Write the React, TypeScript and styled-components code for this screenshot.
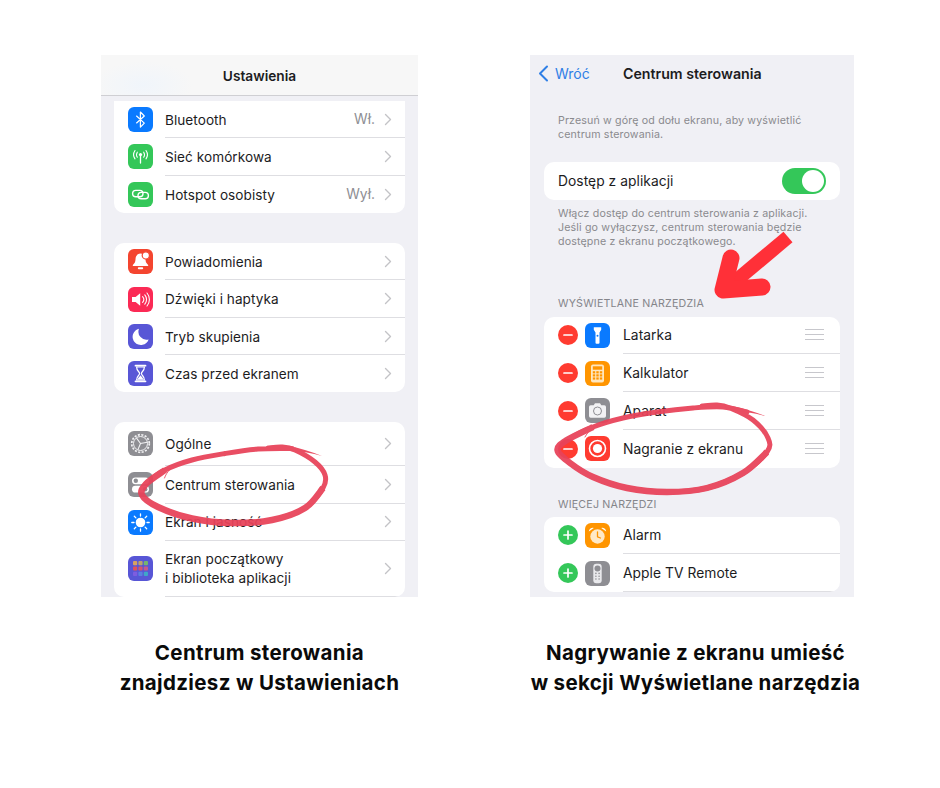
import React from 'react'
import styled, {createGlobalStyle} from 'styled-components'

const GlobalStyle = createGlobalStyle`
  body {
    margin: 0;
    background: #ffffff;
    font-family: Inter, "Liberation Sans", sans-serif;
    color: #1c1c1e;
  }
`

const Page = styled.div`
  width: 940px;
  height: 788px;
  display: flex;
  padding: 55px 0 0 101px;
  box-sizing: border-box;
  overflow: hidden;
`
const Column = styled.div<{$w: number; $mr?: number}>`
  width: ${p => p.$w}px;
  margin-right: ${p => p.$mr ?? 0}px;
  display: flex;
  flex-direction: column;
  align-items: center;
`
const Phone = styled.div<{$w: number}>`
  position: relative;
  width: ${p => p.$w}px;
  height: 542px;
  flex-shrink: 0;
  overflow: hidden;
  background: #f0f0f5;
`
const Caption = styled.h2<{$shift?: number}>`
  margin: 41px 0 0 ${p => p.$shift ?? 0}px;
  font-size: 20.5px;
  line-height: 30px;
  font-weight: 700;
  letter-spacing: 0.35px;
  text-align: center;
  white-space: nowrap;
  color: #0a0a0a;
`
const MainBar = styled.div`
  height: 41px;
  display: flex;
  align-items: center;
  justify-content: center;
  padding-top: 2px;
  box-sizing: border-box;
  background: radial-gradient(ellipse 50px 24px at 42px 30px, #f0f5fb 0%, rgba(240, 245, 251, 0) 100%), #f7f7f7;
  border-bottom: 1px solid #cfcfd3;
  font-size: 13.7px;
  font-weight: 600;
`
const Groups = styled.div`
  display: flex;
  flex-direction: column;
  gap: 30px;
  padding: 5px 13px 0;
`
const Card = styled.div<{$square?: boolean}>`
  background: #ffffff;
  border-radius: ${p => (p.$square ? '0 0 10px 10px' : '10px')};
  overflow: hidden;
`
const Row = styled.div<{$h: number; $gap: number}>`
  height: ${p => p.$h}px;
  display: flex;
  align-items: center;
  gap: ${p => p.$gap}px;
  padding-left: 14px;
`
const IconTile = styled.div<{$bg: string}>`
  width: 25px;
  height: 25px;
  flex-shrink: 0;
  border-radius: 6px;
  background: ${p => p.$bg};
  display: flex;
  align-items: center;
  justify-content: center;
  svg {
    display: block;
  }
`
const RowBody = styled.div<{$last?: boolean}>`
  flex: 1;
  align-self: stretch;
  min-width: 0;
  display: flex;
  align-items: center;
  justify-content: space-between;
  padding-right: 14px;
  border-bottom: ${p => (p.$last ? 'none' : '1px solid #dedee2')};
  > :first-child {
    margin-top: 2px;
  }
`
const Label = styled.span<{$size: number}>`
  font-size: ${p => p.$size}px;
  line-height: 19px;
  letter-spacing: 0.05px;
`
const RowEnd = styled.span`
  display: flex;
  align-items: center;
  gap: 9px;
  margin-right: -1px;
`
const Value = styled.span`
  font-size: 13.8px;
  color: #8e8e93;
`
const DetailBar = styled.div`
  height: 36px;
  display: flex;
  align-items: center;
  padding-left: 8px;
  font-size: 14px;
`
const BackLink = styled.span`
  width: 85px;
  display: flex;
  align-items: center;
  gap: 6px;
  color: #2f7fe6;
`
const BarTitle = styled.span`
  font-size: 14.2px;
  font-weight: 600;
`
const Note = styled.p<{$top: number; $bottom: number}>`
  margin: ${p => p.$top}px 0 ${p => p.$bottom}px;
  padding: 0 14px 0 28px;
  font-size: 10.65px;
  line-height: 13.7px;
  letter-spacing: 0.15px;
  color: #8a8a8e;
`
const SectionTitle = styled.div<{$top: number; $bottom: number}>`
  margin: ${p => p.$top}px 0 ${p => p.$bottom}px;
  padding-left: 28px;
  font-size: 10.65px;
  line-height: 14px;
  letter-spacing: 0.2px;
  color: #85858a;
`
const RightGroups = styled.div`
  padding: 0 14px;
`
const ToggleRow = styled.div`
  height: 38px;
  display: flex;
  align-items: center;
  justify-content: space-between;
  padding: 0 14px;
  background: #ffffff;
  border-radius: 10px;
`
const Toggle = styled.span`
  width: 44px;
  height: 26px;
  padding: 2px;
  box-sizing: border-box;
  display: flex;
  justify-content: flex-end;
  border-radius: 13px;
  background: #34c759;
  &::after {
    content: '';
    width: 22px;
    height: 22px;
    border-radius: 50%;
    background: #ffffff;
  }
`
const RoundBadge = styled.span<{$bg: string}>`
  width: 20px;
  height: 20px;
  flex-shrink: 0;
  border-radius: 50%;
  background: ${p => p.$bg};
  display: flex;
  align-items: center;
  justify-content: center;
  svg {
    display: block;
  }
`
const LeadIn = styled.div`
  display: flex;
  align-items: center;
  gap: 7px;
`
const Grip = styled.span`
  width: 19px;
  height: 11px;
  margin-right: 2px;
  box-sizing: border-box;
  border-top: 1px solid #c7c7cc;
  border-bottom: 1px solid #c7c7cc;
  display: flex;
  align-items: center;
  &::after {
    content: '';
    width: 100%;
    height: 1px;
    background: #c7c7cc;
  }
`
const Overlay = styled.svg`
  position: absolute;
  inset: 0;
  width: 100%;
  height: 100%;
  pointer-events: none;
`

// catmull-rom through the traced points of a hand drawn mark
const smoothPath = (pts: number[][]) => {
  let d = `M${pts[0][0]} ${pts[0][1]}`
  for (let i = 0; i < pts.length - 1; i++) {
    const a = pts[Math.max(i - 1, 0)]
    const b = pts[i]
    const c = pts[i + 1]
    const e = pts[Math.min(i + 2, pts.length - 1)]
    d += `C${b[0] + (c[0] - a[0]) / 6} ${b[1] + (c[1] - a[1]) / 6} ${c[0] - (e[0] - b[0]) / 6} ${c[1] - (e[1] - b[1]) / 6} ${c[0]} ${c[1]}`
  }
  return d
}

const leftLoop = [
  [292, 448.5], [258, 449], [225, 453.5], [192, 460], [165, 470], [146, 484], [142, 495], [158, 507], [192, 518.5],
  [232, 523], [272, 520], [305, 508], [323, 488], [325, 475], [315, 462], [295, 450], [282, 447], [268, 448],
]
const rightLoop = [
  [747, 412], [723, 407], [693, 408], [657, 412], [623, 418], [593, 427], [567, 440], [557.5, 450], [570, 463],
  [593, 477], [627, 488], [667, 492], [707, 488], [743, 473], [767, 452], [768, 438], [753, 420], [730, 408], [717, 405], [702, 406],
]

const Scribble = ({loop, from, to, tail, hair}: {loop: number[][]; from: number; to: number; tail: string; hair: string}) => (
  <g opacity="0.94" fill="none" stroke="#e8435a">
    <path d={smoothPath(loop)} strokeWidth="5" strokeLinecap="round" strokeLinejoin="round" />
    <path d={smoothPath(loop.slice(from, to))} strokeWidth="6.4" />
    <path d={tail} fill="#e8435a" stroke="none" />
    <path d={hair} strokeWidth="0.9" strokeLinecap="round" />
  </g>
)

const Chevron = () => (
  <svg width="8" height="13" viewBox="0 0 8 13" fill="none" stroke="#c3c3c7" strokeWidth="1.4" strokeLinecap="round" strokeLinejoin="round">
    <path d="M1.5 1.5l5 5-5 5" />
  </svg>
)
const Glyph = ({children}: {children: React.ReactNode}) => (
  <svg width={25} height={25} viewBox="0 0 25 25" fill="none">
    {children}
  </svg>
)

const icons: Record<string, React.ReactNode> = {
  bluetooth: (
    <Glyph>
      <path d="M8.3 8.8l8 7.3-3.9 4V5l3.9 4-8 7.2" stroke="#fff" strokeWidth="1.2" strokeLinejoin="round" />
    </Glyph>
  ),
  cellular: (
    <Glyph>
      <circle cx="12.5" cy="10.6" r="1.6" fill="#fff" />
      <path d="M12.5 11v8" stroke="#fff" strokeWidth="1.3" strokeLinecap="round" />
      <path d="M9.3 8.2a4.5 4.5 0 000 5M15.7 8.2a4.5 4.5 0 010 5M7 6.5a7.4 7.4 0 000 8.4M18 6.5a7.4 7.4 0 010 8.4" stroke="#fff" strokeWidth="1.1" strokeLinecap="round" />
    </Glyph>
  ),
  hotspot: (
    <Glyph>
      <rect x="4.6" y="8.4" width="10.4" height="6.4" rx="3.2" stroke="#fff" strokeWidth="1.4" />
      <rect x="10" y="10.4" width="10.4" height="6.4" rx="3.2" stroke="#fff" strokeWidth="1.4" />
    </Glyph>
  ),
  bell: (
    <Glyph>
      <path d="M12.5 4.6c-3.6 0-5 2.9-5 6 0 2.8-1.2 4-2.6 5.4-.3.4-.1 1 .5 1h14.2c.6 0 .8-.6.5-1-1.4-1.4-2.6-2.6-2.6-5.4 0-3.1-1.4-6-5-6z" fill="#fff" />
      <rect x="9.8" y="18.3" width="5.4" height="2" rx="1" fill="#fff" />
      <circle cx="17.8" cy="6.4" r="3.6" fill="#fff" stroke="#f4452f" strokeWidth="1.2" />
    </Glyph>
  ),
  sound: (
    <Glyph>
      <path d="M4 10h3.6l4.6-3.8v12.6L7.6 15H4z" fill="#fff" />
      <path d="M14.6 9.6a4.4 4.4 0 010 5.8M16.8 7.8a7.2 7.2 0 010 9.4M19 6a10 10 0 010 13" stroke="#fff" strokeWidth="1.1" strokeLinecap="round" />
    </Glyph>
  ),
  moon: (
    <Glyph>
      <path d="M11 4.8a8.2 8.2 0 109.6 10.6A8 8 0 0111 4.8z" fill="#fff" />
    </Glyph>
  ),
  hourglass: (
    <Glyph>
      <path d="M7.5 4.7h10M7.5 20.3h10" stroke="#fff" strokeWidth="1.8" strokeLinecap="round" />
      <path d="M8.6 6c0 4 3 4.6 3 6.5S8.6 15 8.6 19h7.8c0-4-3-4.6-3-6.5s3-2.5 3-6.5z" stroke="#fff" strokeWidth="1.2" />
      <path d="M9.6 18.5c.6-2.3 2.9-3.1 2.9-4.4 0 1.3 2.3 2.1 2.9 4.4z" fill="#fff" />
    </Glyph>
  ),
  gear: (
    <Glyph>
      <circle cx="12.5" cy="12.5" r="8.8" stroke="#f2f2f4" strokeWidth="1.7" strokeDasharray="2.1 1.4" />
      <circle cx="12.5" cy="12.5" r="7" stroke="#f2f2f4" strokeWidth="1" />
      <path d="M12.5 12.5l6.8-1.2M12.5 12.5L8.4 6.9M12.5 12.5l-2.7 6.4" stroke="#f2f2f4" strokeWidth="1.1" />
    </Glyph>
  ),
  control: (
    <Glyph>
      <rect x="4" y="5.4" width="17" height="6.8" rx="3.4" fill="#fff" />
      <circle cx="7.8" cy="8.8" r="2.2" fill="#8e8e93" />
      <rect x="4" y="13.8" width="17" height="6.8" rx="3.4" fill="#fff" />
      <circle cx="17.2" cy="17.2" r="2.2" fill="#8e8e93" />
    </Glyph>
  ),
  sun: (
    <Glyph>
      <circle cx="12.5" cy="12.5" r="4.8" fill="#fff" />
      <path d="M12.5 3.8V6M12.5 19v2.2M3.8 12.5H6M19 12.5h2.2M6.3 6.3l1.6 1.6M17.1 17.1l1.6 1.6M6.3 18.7l1.6-1.6M17.1 7.9l1.6-1.6" stroke="#fff" strokeWidth="1.3" strokeLinecap="round" />
    </Glyph>
  ),
  apps: (
    <Glyph>
      <rect x="5" y="5" width="4.2" height="4.2" rx="1" fill="#d9a25f" />
      <rect x="10.4" y="5" width="4.2" height="4.2" rx="1" fill="#b9a46d" />
      <rect x="15.8" y="5" width="4.2" height="4.2" rx="1" fill="#76b56d" />
      <rect x="5" y="10.4" width="4.2" height="4.2" rx="1" fill="#e0525a" />
      <rect x="10.4" y="10.4" width="4.2" height="4.2" rx="1" fill="#d2566e" />
      <rect x="15.8" y="10.4" width="4.2" height="4.2" rx="1" fill="#c65a8c" />
      <rect x="5" y="15.8" width="4.2" height="4.2" rx="1" fill="#7d5de0" />
      <rect x="10.4" y="15.8" width="4.2" height="4.2" rx="1" fill="#5b80e0" />
      <rect x="15.8" y="15.8" width="4.2" height="4.2" rx="1" fill="#3fa6c8" />
    </Glyph>
  ),
  torch: (
    <Glyph>
      <path d="M8.8 4.2h7.4v2.6l-1.7 2.7v10.3a1 1 0 01-1 1h-2a1 1 0 01-1-1V9.5L8.8 6.8z" fill="#fff" />
      <circle cx="12.5" cy="12.8" r="1" fill="#0a7aff" />
    </Glyph>
  ),
  calculator: (
    <Glyph>
      <rect x="6" y="3.5" width="13" height="18" rx="2" fill="#ffe7bf" />
      <rect x="7.8" y="5.3" width="9.4" height="3.4" fill="#ff9500" />
      {[7.8, 11.3, 14.8].map(x =>
        [10.2, 13.3, 16.4].map(y => <rect key={`${x}-${y}`} x={x} y={y} width="2.4" height="2.2" fill="#ff9500" />),
      )}
    </Glyph>
  ),
  camera: (
    <Glyph>
      <path d="M4 9a1.7 1.7 0 011.7-1.7h3l1.3-2h5l1.3 2h3A1.7 1.7 0 0121 9v9a1.7 1.7 0 01-1.7 1.7H5.7A1.7 1.7 0 014 18z" fill="#f2f2f4" />
      <circle cx="12.5" cy="13" r="4" fill="#f2f2f4" stroke="#8e8e93" strokeWidth="1" />
    </Glyph>
  ),
  record: (
    <Glyph>
      <circle cx="12.5" cy="12.5" r="8" stroke="#fff" strokeWidth="1.6" />
      <circle cx="12.5" cy="12.5" r="4.6" fill="#fff" />
    </Glyph>
  ),
  alarm: (
    <Glyph>
      <circle cx="12.5" cy="13.5" r="7.2" fill="#ffe9c7" />
      <path d="M12.5 8.8v5l3 1.2" stroke="#ff9500" strokeWidth="1.3" strokeLinecap="round" strokeLinejoin="round" />
      <path d="M3.8 8.4a4 4 0 015-3.4zM21.2 8.4a4 4 0 00-5-3.4z" fill="#fff" />
    </Glyph>
  ),
  remote: (
    <Glyph>
      <rect x="8.3" y="2.8" width="8.4" height="19.4" rx="3" fill="#e9e9ec" />
      <circle cx="12.5" cy="7.4" r="3" fill="#8e8e93" />
      {[12.4, 15.2, 18].map(y => (
        <React.Fragment key={y}>
          <circle cx="10.9" cy={y} r=".8" fill="#8e8e93" />
          <circle cx="14.1" cy={y} r=".8" fill="#8e8e93" />
        </React.Fragment>
      ))}
    </Glyph>
  ),
}

type SettingsItem = {icon: string; bg: string; label: React.ReactNode; value?: string; h: number; last?: boolean}

const settingsGroups: SettingsItem[][] = [
  [
    {icon: 'bluetooth', bg: '#0a7aff', label: 'Bluetooth', value: 'Wł.', h: 37.3},
    {icon: 'cellular', bg: '#34c759', label: 'Sieć komórkowa', h: 37.3},
    {icon: 'hotspot', bg: '#34c759', label: 'Hotspot osobisty', value: 'Wył.', h: 37.4, last: true},
  ],
  [
    {icon: 'bell', bg: '#f4452f', label: 'Powiadomienia', h: 37.3},
    {icon: 'sound', bg: '#fb2a55', label: 'Dźwięki i haptyka', h: 37.7},
    {icon: 'moon', bg: '#5856d6', label: 'Tryb skupienia', h: 37.3},
    {icon: 'hourglass', bg: '#5856d6', label: 'Czas przed ekranem', h: 36.7, last: true},
  ],
  [
    {icon: 'gear', bg: '#8e8e93', label: 'Ogólne', h: 44},
    {icon: 'control', bg: '#8e8e93', label: 'Centrum sterowania', h: 38},
    {icon: 'sun', bg: '#0a7aff', label: 'Ekran i jasność', h: 37},
    {
      icon: 'apps',
      bg: '#5856d6',
      label: (
        <>
          Ekran początkowy
          <br />i biblioteka aplikacji
        </>
      ),
      h: 56,
    },
  ],
]

const activeTools = [
  {icon: 'torch', bg: '#0a7aff', label: 'Latarka'},
  {icon: 'calculator', bg: '#ff9500', label: 'Kalkulator'},
  {icon: 'camera', bg: '#8e8e93', label: 'Aparat'},
  {icon: 'record', bg: '#ff3b30', label: 'Nagranie z ekranu'},
]
const moreTools = [
  {icon: 'alarm', bg: '#ff9500', label: 'Alarm'},
  {icon: 'remote', bg: '#8e8e93', label: 'Apple TV Remote'},
]

const ToolRow = ({icon, bg, label, add, last}: {icon: string; bg: string; label: string; add?: boolean; last?: boolean}) => (
  <Row $h={37.75} $gap={13}>
    <LeadIn>
      <RoundBadge $bg={add ? '#34c759' : '#ff3b30'}>
        <svg width="12" height="12" viewBox="0 0 12 12" stroke="#fff" strokeWidth="1.7" strokeLinecap="round">
          <path d={add ? 'M2 6h8M6 2v8' : 'M2 6h8'} />
        </svg>
      </RoundBadge>
      <IconTile $bg={bg}>{icons[icon]}</IconTile>
    </LeadIn>
    <RowBody $last={last}>
      <Label $size={13.8}>{label}</Label>
      {!add && <Grip />}
    </RowBody>
  </Row>
)

const App = () => (
  <Page>
    <GlobalStyle />
    <Column $w={317} $mr={112}>
      <Phone $w={317}>
        <MainBar>Ustawienia</MainBar>
        <Groups>
          {settingsGroups.map((group, i) => (
            <Card key={i} $square={i === 0}>
              {group.map(item => (
                <Row key={item.icon} $h={item.h} $gap={12}>
                  <IconTile $bg={item.bg}>{icons[item.icon]}</IconTile>
                  <RowBody $last={item.last}>
                    <Label $size={13.6}>{item.label}</Label>
                    <RowEnd>
                      {item.value && <Value>{item.value}</Value>}
                      <Chevron />
                    </RowEnd>
                  </RowBody>
                </Row>
              ))}
            </Card>
          ))}
        </Groups>
        <Overlay viewBox="101 55 317 542">
          <Scribble
            loop={leftLoop}
            from={4}
            to={13}
            tail="M322 456C312 453 302 451 290 451L288 446C300 448 312 452 322 456Z"
            hair="M164.5 478C166.5 472 172 466 180 463"
          />
        </Overlay>
      </Phone>
      <Caption>
        Centrum sterowania
        <br />
        znajdziesz w Ustawieniach
      </Caption>
    </Column>
    <Column $w={324}>
      <Phone $w={324}>
        <DetailBar>
          <BackLink>
            <svg width="11" height="17" viewBox="0 0 11 17" fill="none" stroke="#2f7fe6" strokeWidth="2" strokeLinecap="round" strokeLinejoin="round">
              <path d="M9 1.5L2 8.5l7 7" />
            </svg>
            Wróć
          </BackLink>
          <BarTitle>Centrum sterowania</BarTitle>
        </DetailBar>
        <Note $top={23} $bottom={21}>
          Przesuń w górę od dołu ekranu, aby wyświetlić
          <br />
          centrum sterowania.
        </Note>
        <RightGroups>
          <ToggleRow>
            <Label $size={13.8}>Dostęp z aplikacji</Label>
            <Toggle />
          </ToggleRow>
        </RightGroups>
        <Note $top={7} $bottom={0}>
          Włącz dostęp do centrum sterowania z aplikacji.
          <br />
          Jeśli go wyłączysz, centrum sterowania będzie
          <br />
          dostępne z ekranu początkowego.
        </Note>
        <SectionTitle $top={48} $bottom={6}>WYŚWIETLANE NARZĘDZIA</SectionTitle>
        <RightGroups>
          <Card>
            {activeTools.map((tool, i) => (
              <ToolRow key={tool.icon} {...tool} last={i === activeTools.length - 1} />
            ))}
          </Card>
        </RightGroups>
        <SectionTitle $top={30} $bottom={5}>WIĘCEJ NARZĘDZI</SectionTitle>
        <RightGroups>
          <Card>
            {moreTools.map(tool => (
              <ToolRow key={tool.icon} {...tool} add />
            ))}
          </Card>
        </RightGroups>
        <Overlay viewBox="530 55 324 542">
          <path d="M788 237L726 289" stroke="#ff3038" strokeWidth="14" fill="none" />
          <path d="M731 258L723 290L762 287" stroke="#ff3038" strokeWidth="17" fill="none" strokeLinecap="round" strokeLinejoin="round" />
          <Scribble
            loop={rightLoop}
            from={5}
            to={15}
            tail="M765 416C755 413 742 411 728 410L724 404.5C740 407 755 412 765 416Z"
            hair="M585 437C588 431 596 424 607 420"
          />
        </Overlay>
      </Phone>
      <Caption $shift={7}>
        Nagrywanie z ekranu umieść
        <br />w sekcji Wyświetlane narzędzia
      </Caption>
    </Column>
  </Page>
)

export default App
